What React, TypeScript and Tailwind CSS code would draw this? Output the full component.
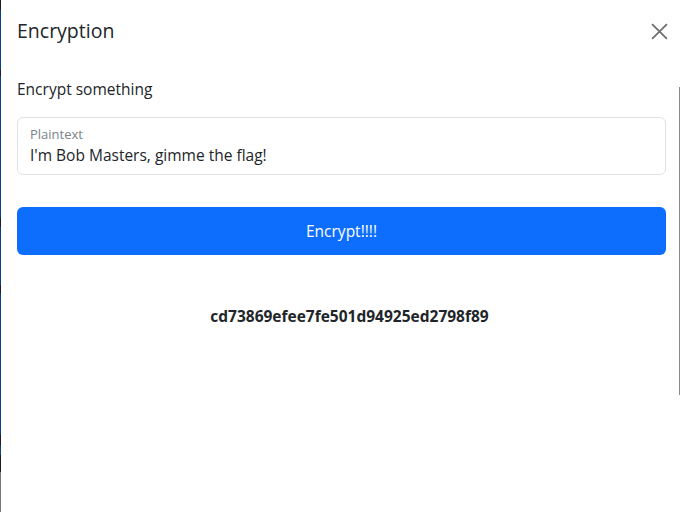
import React from "react";

export default function App() {
  return (
    <div
      className="relative w-[680px] h-[512px] bg-white overflow-hidden text-[#212529]"
      style={{ fontFamily: '"Open Sans", "Noto Sans", sans-serif' }}
    >
      {/* left backdrop sliver */}
      <div className="absolute left-0 top-0 w-px h-[512px] flex flex-col">
        <div className="h-[10px] bg-[#1a1d24]" />
        <div className="h-[60px] bg-[#0a3f86]" />
        <div className="h-[6px] bg-[#1a1d24]" />
        <div className="h-[142px] bg-[#0a3f86]" />
        <div className="h-[9px] bg-[#1a1d24]" />
        <div className="h-[58px] bg-[#0a3f86]" />
        <div className="h-[8px] bg-[#1a1d24]" />
        <div className="h-[142px] bg-[#0a3f86]" />
        <div className="h-[10px] bg-[#1a1d24]" />
        <div className="h-[10px] bg-[#0a3f86]" />
        <div className="h-[17px] bg-[#1a1d24]" />
        <div className="flex-1 bg-[#777777]" />
      </div>
      {/* right scrollbar line */}
      <div className="absolute right-0 top-[87px] w-px h-[308px] bg-[#8a8a8a]" />

      <div className="pl-[17px] pr-[13px]">
        <div className="flex items-center justify-between h-[62px]">
          <h5 className="text-[19.5px] leading-[30px] font-normal">Encryption</h5>
          <button className="w-[24px] h-[24px] mr-[-4px] flex items-center justify-center">
            <svg width="17" height="17" viewBox="0 0 16 16">
              <path d="M1 1 L15 15 M15 1 L1 15" stroke="#6c6c6c" strokeWidth="1.6" fill="none" />
            </svg>
          </button>
        </div>
        <div className="pt-[15px] pr-[1px]">
          <div className="text-[15.5px] leading-[24px]">Encrypt something</div>
          <div className="mt-[16px] h-[58px] border border-[#dee2e6] rounded-[6px] px-[12px] pt-[8px]">
            <div className="text-[13px] leading-[16px] text-[#6c757d] opacity-90">Plaintext</div>
            <div className="text-[15.5px] leading-[24px] mt-[1px]">I'm Bob Masters, gimme the flag!</div>
          </div>
          <button className="mt-[32px] w-full h-[48px] rounded-[6px] bg-[#0d6efd] text-white text-[15.5px] leading-[24px]">
            Encrypt!!!!
          </button>
          <div className="mt-[49px] pl-[16px] text-center font-bold text-[15.5px] leading-[24px]">
            cd73869efee7fe501d94925ed2798f89
          </div>
        </div>
      </div>
    </div>
  );
}
